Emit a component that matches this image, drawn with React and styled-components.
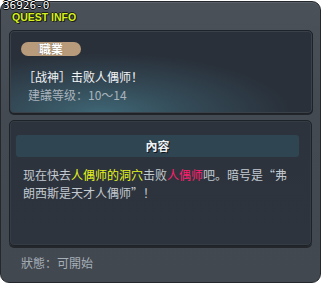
import React from "react";
import styled, { createGlobalStyle } from "styled-components";

const Global = createGlobalStyle`
  html, body {
    margin: 0;
    padding: 0;
    background: #ffffff;
  }
  body {
    font-family: "Noto Sans CJK SC", "Noto Sans", sans-serif;
  }
`;

export default function App() {
  return (
    <>
      <Global />
      <Frame>
        <QuestId>36926-0</QuestId>
        <Header>
          <Title>QUEST INFO</Title>
        </Header>
        <SummaryCard>
          <Badge>職業</Badge>
          <QuestName>［战神］击败人偶师！</QuestName>
          <Level>建議等级：10～14</Level>
        </SummaryCard>
        <ContentCard>
          <SectionBar>內容</SectionBar>
          <Body>
            现在快去<Hl $color="#e6f51e">人偶师的洞穴</Hl>击败<Hl $color="#ff1f70">人偶师</Hl>吧。暗号是“弗朗西斯是天才人偶师”！
          </Body>
        </ContentCard>
        <Status>狀態：可開始</Status>
      </Frame>
    </>
  );
}

const Frame = styled.div`
  position: relative;
  box-sizing: border-box;
  margin-top: 1px;
  width: 321px;
  height: 282px;
  border: 1px solid #24282d;
  border-radius: 9px;
  background: linear-gradient(180deg, #4a5159 0%, #444a52 40%, #42484f 100%);
  box-shadow: inset 0 1px 0 #5a6169;
  padding: 0 7px 0 8px;
  display: flex;
  flex-direction: column;
`;

const QuestId = styled.div`
  position: absolute;
  left: 2px;
  top: -2px;
  font-family: "DejaVu Sans Mono", monospace;
  font-size: 11px;
  line-height: 12px;
  color: #ffffff;
  text-shadow: 1px 0 0 #000, -1px 0 0 #000, 0 1px 0 #000, 0 -1px 0 #000;
`;

const Header = styled.div`
  height: 28px;
  display: flex;
  align-items: flex-start;
  padding: 9px 0 0 3px;
  box-sizing: border-box;
`;

const Title = styled.div`
  font-family: "Liberation Sans", sans-serif;
  font-weight: bold;
  font-size: 10.5px;
  line-height: 12px;
  color: #d6ef1e;
  text-shadow: 1px 1px 0 #1c2014, -1px 0 0 #1c2014, 0 -1px 0 #1c2014, 1px 0 0 #1c2014;
`;

const Card = styled.div`
  box-sizing: border-box;
  border: 1px solid #1e2329;
  border-radius: 5px;
  box-shadow: inset 0 0 0 1px #3a4149, 0 1px 0 #22262b;
`;

const SummaryCard = styled(Card)`
  height: 84px;
  width: 304px;
  padding: 11px 0 0 11px;
  background:
    radial-gradient(ellipse 190px 60px at 30% 100%, #3f6675 0%, rgba(63, 102, 117, 0.5) 45%, rgba(41, 48, 58, 0) 100%),
    #29303a;
  display: flex;
  flex-direction: column;
  align-items: flex-start;
`;

const Badge = styled.div`
  width: 60px;
  height: 14px;
  border-radius: 7px;
  background: #b89b7a;
  color: #ffffff;
  font-size: 12px;
  font-weight: bold;
  line-height: 14px;
  text-align: center;
  text-shadow: 0 0 1px #5a4630;
`;

const QuestName = styled.div`
  margin-top: 13px;
  margin-left: 2px;
  font-size: 12px;
  line-height: 16px;
  color: #f2f4f6;
`;

const Level = styled.div`
  margin-top: 2px;
  margin-left: 7px;
  font-size: 12px;
  line-height: 16px;
  color: #a8b3bc;
`;

const ContentCard = styled(Card)`
  margin-top: 6px;
  height: 126px;
  width: 303px;
  padding: 14px 12px 0 6px;
  background: linear-gradient(180deg, #2c333c 0%, #2e343d 100%);
  box-shadow: inset 0 0 0 1px #353c44, 0 2px 0 #23272c;
`;

const SectionBar = styled.div`
  height: 22px;
  border-radius: 3px;
  background: #2f4652;
  color: #f0f2f4;
  font-size: 12px;
  font-weight: bold;
  line-height: 22px;
  text-align: center;
  text-shadow: 1px 1px 0 #0e1418;
`;

const Body = styled.div`
  margin: 9px 0 0 7px;
  width: 266px;
  font-size: 12px;
  line-height: 18px;
  color: #c3cad1;
`;

const Hl = styled.span`
  color: ${(p) => p.$color};
`;

const Status = styled.div`
  margin-top: 9px;
  padding-left: 12px;
  font-size: 12px;
  line-height: 16px;
  color: #a6afb8;
`;
